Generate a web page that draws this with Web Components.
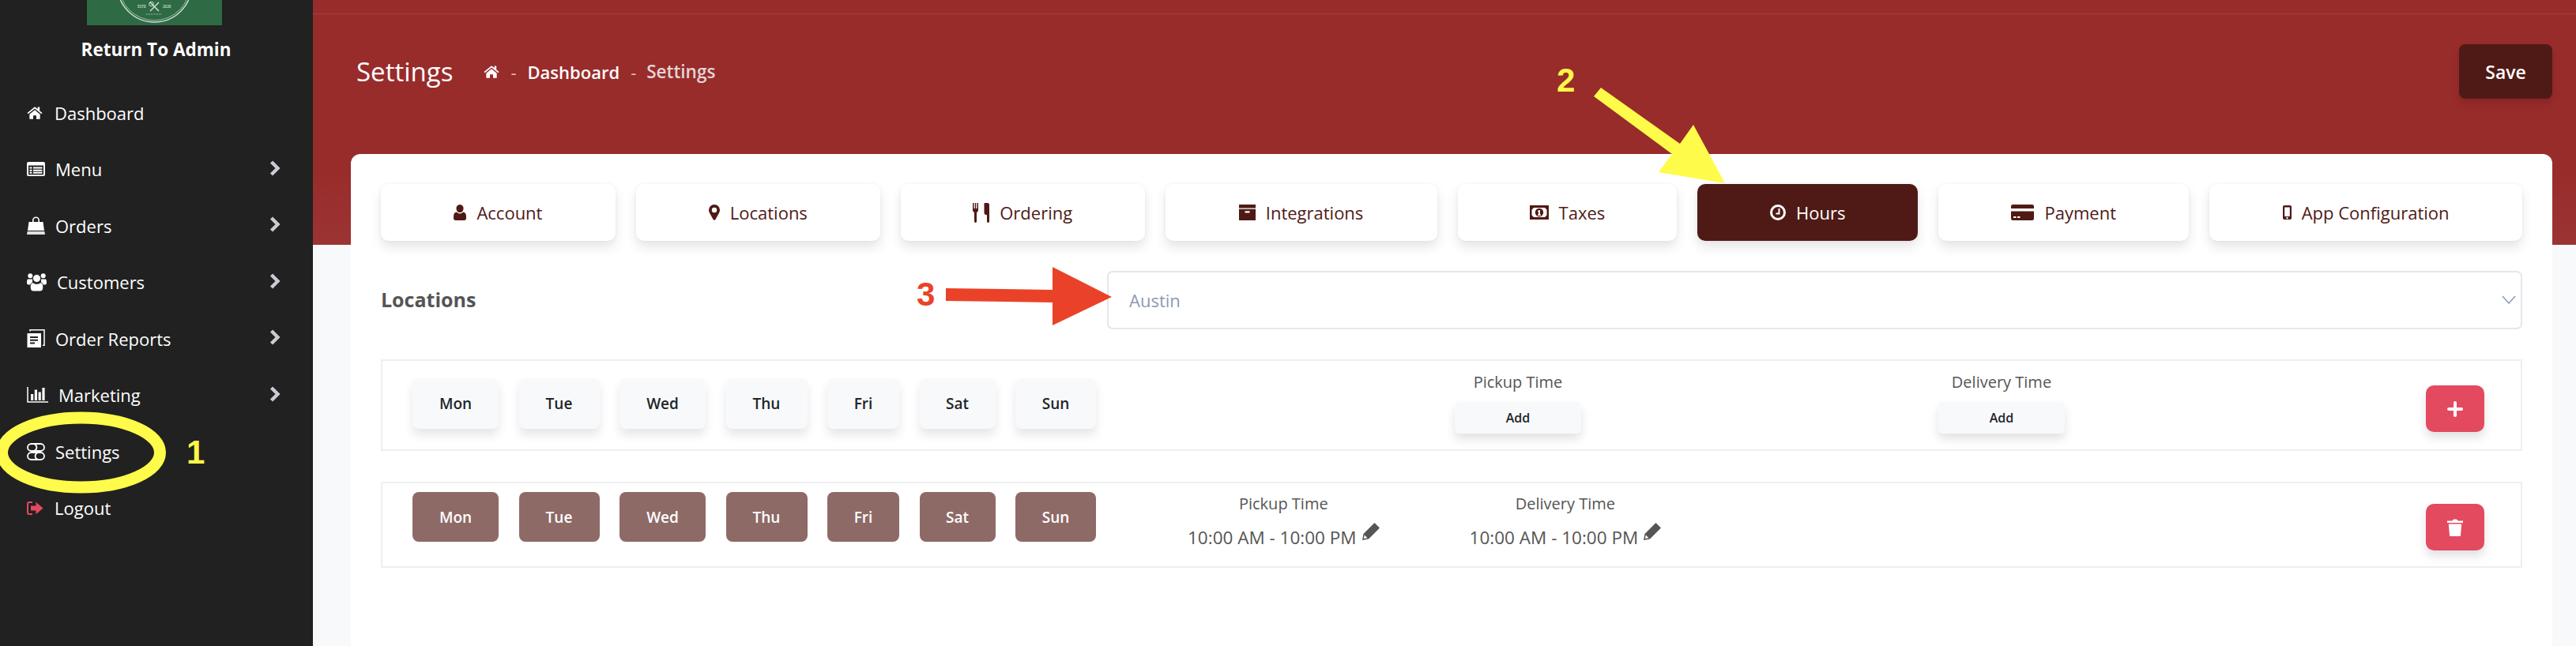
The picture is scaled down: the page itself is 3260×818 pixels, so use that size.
<!DOCTYPE html>
<html lang="en">
<head>
<meta charset="utf-8">
<title>Settings</title>
<style>
  html, body { margin: 0; height: 100%; overflow: hidden; background: #f8f9fb; }
  body { font-family: "Open Sans", sans-serif; }
</style>
</head>
<body>
<admin-app>
  <side-bar slot="side">
    <nav-item icon="home" w="20" h="17" gap="15">Dashboard</nav-item>
    <nav-item icon="menu" w="23" h="18" more>Menu</nav-item>
    <nav-item icon="bag" w="23" h="23" more>Orders</nav-item>
    <nav-item icon="users" w="25" h="23" gap="13" more>Customers</nav-item>
    <nav-item icon="report" w="23" h="23" more>Order Reports</nav-item>
    <nav-item icon="chart" w="27" h="20" gap="13" more>Marketing</nav-item>
    <nav-item icon="settings" w="23" h="22">Settings</nav-item>
    <nav-item icon="logout" w="21" h="17" gap="14" tint="#e34a60">Logout</nav-item>
  </side-bar>

  <page-header title="Settings" slot="head"></page-header>

  <settings-card slot="card">
    <tab-bar>
      <tab-button icon="user" w="16" h="20">Account</tab-button>
      <tab-button icon="pin" w="14" h="20">Locations</tab-button>
      <tab-button icon="cutlery" w="21" h="25">Ordering</tab-button>
      <tab-button icon="archive" w="21" h="20">Integrations</tab-button>
      <tab-button icon="money" w="24" h="18">Taxes</tab-button>
      <tab-button icon="clock" w="20" h="20" active>Hours</tab-button>
      <tab-button icon="card" w="29" h="20">Payment</tab-button>
      <tab-button icon="mobile" w="11" h="18">App Configuration</tab-button>
    </tab-bar>

    <location-select label="Locations" value="Austin"></location-select>

    <hours-row pad-top="22" act-top="31" first-gap="454" col-gap="452">
      <day-button slot="days" w="109">Mon</day-button>
      <day-button slot="days" w="102">Tue</day-button>
      <day-button slot="days" w="109">Wed</day-button>
      <day-button slot="days" w="103">Thu</day-button>
      <day-button slot="days" w="91">Fri</day-button>
      <day-button slot="days" w="96">Sat</day-button>
      <day-button slot="days" w="102">Sun</day-button>
      <time-col slot="times" label="Pickup Time"></time-col>
      <time-col slot="times" label="Delivery Time"></time-col>
      <action-button slot="action" icon="plus"></action-button>
    </hours-row>

    <hours-row selected pad-top="11" act-top="26" first-gap="116" col-gap="114">
      <day-button slot="days" w="109" selected>Mon</day-button>
      <day-button slot="days" w="102" selected>Tue</day-button>
      <day-button slot="days" w="109" selected>Wed</day-button>
      <day-button slot="days" w="103" selected>Thu</day-button>
      <day-button slot="days" w="91" selected>Fri</day-button>
      <day-button slot="days" w="96" selected>Sat</day-button>
      <day-button slot="days" w="102" selected>Sun</day-button>
      <time-col slot="times" label="Pickup Time" value="10:00 AM - 10:00 PM"></time-col>
      <time-col slot="times" label="Delivery Time" value="10:00 AM - 10:00 PM"></time-col>
      <action-button slot="action" icon="trash"></action-button>
    </hours-row>
  </settings-card>

  <note-layer slot="notes"></note-layer>
</admin-app>

<script>
// Every icon is drawn in its own viewBox; "body" is the inner svg markup
const ICONS = {
  home: { box: '0 0 24 20', body: '<path fill="currentColor" d="M12 1.2 .6 10.6l1.3 1.6L12 3.9l10.1 8.3 1.3-1.6-4-3.3V1.6h-3v3.1zM4 12.7 12 6l8 6.7V20h-5.6v-5.4H9.6V20H4z"/>' },
  menu: { box: '0 0 23 18', body: '<path fill="currentColor" fill-rule="evenodd" d="M2 0h19a2 2 0 0 1 2 2v14a2 2 0 0 1-2 2H2a2 2 0 0 1-2-2V2a2 2 0 0 1 2-2zm0 4.5v11.2c0 .3.2.5.5.5h18c.3 0 .5-.2.5-.5V4.500z"/><path fill="currentColor" d="M3.500 6.500h3v2h-3zM8 6.500h11.500v2H8zM3.500 9.700h3v2h-3zM8 9.700h11.500v2H8zM3.500 12.800h3v2h-3zM8 12.800h11.500v2H8z"/>' },
  bag: { box: '0 0 23 23', body: '<path fill="currentColor" d="M7 7V5a4.500 4.500 0 0 1 9 0v2h4.500L22 18H1L2.500 7zm1.600 0h5.800V5a2.900 2.900 0 0 0-5.800 0z"/><path fill="#dfe1e3" d="M.6 19h21.800l.6 4H0z"/>' },
  users: { box: '0 0 25 23', body: '<g fill="currentColor"><circle cx="4.300" cy="3.200" r="3"/><circle cx="20.700" cy="3.200" r="3"/><path d="M1.500 7.500h5.500v7H2C.7 14.500 0 13.500 0 12c0-2.500.4-4.500 1.500-4.500zM23.500 7.500H18v7h5c1.300 0 2-1 2-2.500 0-2.500-.4-4.500-1.500-4.500z"/><circle cx="12.500" cy="6.500" r="5" stroke="#212121" stroke-width="1"/><path stroke="#212121" stroke-width="1" d="M8 11.800c1.200 1 2.800 1.600 4.500 1.600s3.300-.6 4.500-1.600c2.600 0 3.800 2.200 3.800 6 0 3.200-1.500 5.200-4 5.200H8.200c-2.500 0-4-2-4-5.200 0-3.800 1.200-6 3.800-6z"/></g>' },
  report: { box: '0 0 23 23', body: '<path fill="currentColor" fill-rule="evenodd" d="M.5 5h17.500v18H.5zM4 9v2h10V9zm0 3.700v2h10v-2zm0 3.700v2h6v-2z"/><path fill="none" stroke="currentColor" stroke-width="1.500" d="M4 2.500V.8h18v19.500h-2"/>' },
  chart: { box: '0 0 27 20', body: '<path fill="none" stroke="currentColor" stroke-width="1.500" d="M1 0v19h26"/><path fill="currentColor" d="M5 9h3.200v8H5zM9.800 3.500H13V17H9.800zM14.600 6.500h3.200V17h-3.200zM19.400 1h3.200v16h-3.200z"/>' },
  settings: { box: '0 0 23 22', body: '<g fill="none" stroke="currentColor" stroke-width="1.800"><rect x="1" y="1" width="21" height="9" rx="4.500"/><rect x="1" y="12" width="21" height="9" rx="4.500"/><path d="M9.500 1.500a4.200 4.200 0 0 1 0 8M13.500 12.500a4.200 4.200 0 0 0 0 8"/></g>' },
  logout: { box: '0 0 21 17', body: '<path fill="none" stroke="currentColor" stroke-width="2" d="M7 1H3a2 2 0 0 0-2 2v11a2 2 0 0 0 2 2h4"/><path fill="currentColor" d="M5 5.500h6.500V.8L20.500 8.500l-9 7.700v-4.700H5z"/>' },
  chevron: { box: '0 0 14 20', body: '<path fill="none" stroke="currentColor" stroke-width="4.400" stroke-linejoin="miter" d="M2.500 2 10.500 10l-8 8"/>' },
  user: { box: '0 0 16 20', body: '<path fill="currentColor" d="M8 0a4.500 4.500 0 0 1 4.500 5c0 3-2 5-4.500 5S3.500 8 3.500 5A4.500 4.500 0 0 1 8 0zM4 9.500C5 10.800 6.400 11.500 8 11.500s3-.7 4-2c2.600 0 4 2 4 6v2c0 1.500-1 2.500-2.500 2.500h-11C1 20 0 19 0 17.500v-2c0-4 1.400-6 4-6z"/>' },
  pin: { box: '0 0 14 20', body: '<path fill="currentColor" fill-rule="evenodd" d="M7 0a7 7 0 0 1 7 7c0 1.600-.6 2.700-1.200 4L8.400 19a1.600 1.600 0 0 1-2.800 0L1.200 11C.6 9.700 0 8.600 0 7a7 7 0 0 1 7-7zm0 3.800a3.200 3.200 0 1 0 0 6.400 3.200 3.200 0 0 0 0-6.400z"/>' },
  cutlery: { box: '0 0 21 25', body: '<path fill="currentColor" d="M0 0h1.500v7h1.300V0h1.400v7h1.300V0H7v9c0 1.500-.8 2.500-2 3v11.500a1.500 1.500 0 0 1-3 0V12C.8 11.500 0 10.500 0 9zM15 0h3c1.500 0 3 .6 3 2v21.500a1.500 1.500 0 0 1-3 0V15h-1c-1.500 0-2.500-1-2.500-2.500V3c-.1-1.500-.1-3 .5-3z"/>' },
  archive: { box: '0 0 21 20', body: '<path fill="currentColor" fill-rule="evenodd" d="M0 0h21v4.500H0zM0 5.800h21V20H0zM7.500 8.200v2.300h6V8.200z"/>' },
  money: { box: '0 0 24 18', body: '<path fill="currentColor" fill-rule="evenodd" d="M0 0h24v18H0zM5 3l-2.500 2.500v7L5 15h14l2.500-2.500v-7L19 3z"/><path fill="currentColor" fill-rule="evenodd" d="M12 3.800a5.200 5.200 0 1 1 0 10.400 5.200 5.200 0 0 1 0-10.400zM11.800 6 10 7.200v1.200l1-.4v3.500h-1V13h4v-1.500h-1V6z"/>' },
  clock: { box: '0 0 20 20', body: '<path fill="currentColor" fill-rule="evenodd" d="M10 0a10 10 0 1 1 0 20 10 10 0 0 1 0-20zm0 3a7 7 0 1 0 0 14 7 7 0 0 0 0-14z"/><path fill="currentColor" d="M10.500 5h2v7.500H7.500v-2h3z"/>' },
  card: { box: '0 0 29 20', body: '<path fill="currentColor" fill-rule="evenodd" d="M2.500 0h24A2.500 2.500 0 0 1 29 2.500V5H0V2.500A2.500 2.500 0 0 1 2.500 0zM0 8.500h29v9a2.500 2.500 0 0 1-2.500 2.500h-24A2.500 2.500 0 0 1 0 17.500zm3 6.500v2h3.500v-2zm5 0v2h3.500v-2z"/>' },
  mobile: { box: '0 0 11 18', body: '<path fill="currentColor" fill-rule="evenodd" d="M2 0h7a2 2 0 0 1 2 2v14a2 2 0 0 1-2 2H2a2 2 0 0 1-2-2V2a2 2 0 0 1 2-2zm.2 2.500v11.500h6.600V2.500zM5.500 14.800a1.200 1.200 0 1 0 0 2.400 1.200 1.200 0 0 0 0-2.400z"/>' },
  pencil: { box: '0 0 22 22', body: '<path fill="currentColor" d="M15.500 0 22 6.500 8 20.500 0 22l1.500-8zM2.800 15.500l-.9 4.600 4.600-.9z"/>' },
  plus: { box: '0 0 20 20', body: '<path fill="none" stroke="currentColor" stroke-width="4" stroke-linecap="round" d="M10 2v16M2 10h16"/>' },
  trash: { box: '0 0 20 22', body: '<path fill="currentColor" d="M0 2.500h6.500C7 1 8 .5 10 .5s3 .5 3.500 2H20V5H0zM1.800 6.500h16.400L17 21c0 .6-.5 1-1 1H4c-.5 0-1-.4-1-1z"/>' },
};

class UiIcon extends HTMLElement {
  connectedCallback() {
    const icon = ICONS[this.getAttribute('name')];
    const w = this.getAttribute('w');
    const h = this.getAttribute('h');
    this.attachShadow({ mode: 'open' });
    this.shadowRoot.innerHTML = `
      <style>
        :host { display: inline-flex; flex: none; }
        svg { display: block; }
      </style>
      <svg width="${w}" height="${h}" viewBox="${icon.box}">${icon.body}</svg>
    `;
  }
}

// Sidebar on the left, header + card on the right, annotations on top of it all
class AdminApp extends HTMLElement {
  constructor() {
    super();
    this.attachShadow({ mode: 'open' });
    this.shadowRoot.innerHTML = `
      <style>
        :host { display: flex; position: relative; width: 3260px; height: 818px; overflow: hidden; }
        main { flex: 1; min-width: 0; }
        .overlap { margin: -115px 30px 0 48px; }
      </style>
      <slot name="side"></slot>
      <main>
        <slot name="head"></slot>
        <div class="overlap"><slot name="card"></slot></div>
      </main>
      <slot name="notes"></slot>
    `;
  }
}

class SideBar extends HTMLElement {
  constructor() {
    super();
    this.attachShadow({ mode: 'open' });
    this.shadowRoot.innerHTML = `
      <style>
        :host { display: flex; flex-direction: column; width: 396px; flex: none; background: #212121; color: #fff; }
        .logo { display: block; width: 171px; height: 32px; margin: 0 auto 0 110px; }
        .back { margin: 17px 0 0 -1px; height: 28px; line-height: 28px; text-align: center; font-weight: 700; font-size: 22.500px; }
        nav { margin-top: 30px; display: grid; grid-auto-rows: 71.500px; }
      </style>
      <svg class="logo" viewBox="0 0 171 32">
        <rect width="171" height="32" fill="#2e6a44"/>
        <circle cx="85.500" cy="-19" r="47" fill="none" stroke="#cfe0d3" stroke-width="1.400"/>
        <circle cx="85.500" cy="-19" r="44.800" fill="none" stroke="#cfe0d3" stroke-width=".7"/>
        <path d="M80 3l11 11M91 3 80 14" stroke="#cfe0d3" stroke-width="1.500"/>
        <circle cx="81.500" cy="5" r="2.800" fill="none" stroke="#cfe0d3"/>
        <text x="64" y="9.500" font-size="4.500" fill="#b9d2bf" font-family="Open Sans" font-weight="700">ESTD</text>
        <text x="96" y="9.500" font-size="4.500" fill="#b9d2bf" font-family="Open Sans" font-weight="700">2020</text>
        <path d="M75 18h20" stroke="#b9d2bf" stroke-width="1" stroke-dasharray="1 1"/>
      </svg>
      <div class="back">Return To Admin</div>
      <nav><slot></slot></nav>
    `;
  }
}

class NavItem extends HTMLElement {
  constructor() {
    super();
    this.attachShadow({ mode: 'open' });
  }

  connectedCallback() {
    const gap = this.getAttribute('gap') || 13;
    const tint = this.getAttribute('tint') || '#fff';
    const more = this.hasAttribute('more')
      ? '<ui-icon class="more" name="chevron" w="14" h="20"></ui-icon>'
      : '';
    this.shadowRoot.innerHTML = `
      <style>
        :host { display: flex; align-items: center; padding: 0 41px 0 34px; font-size: 22px; color: #fff; }
        .icon { color: ${tint}; margin-right: ${gap}px; }
        .more { color: #c9cdd1; margin-left: auto; margin-top: -3px; }
      </style>
      <ui-icon class="icon" name="${this.getAttribute('icon')}" w="${this.getAttribute('w')}" h="${this.getAttribute('h')}"></ui-icon>
      <slot></slot>
      ${more}
    `;
  }
}

class PageHeader extends HTMLElement {
  constructor() {
    super();
    this.attachShadow({ mode: 'open' });
  }

  connectedCallback() {
    const title = this.getAttribute('title');
    this.shadowRoot.innerHTML = `
      <style>
        :host { display: block; height: 310px; background: linear-gradient(#982c2b 70%, #9b3433); color: #fff; }
        .line { height: 17px; border-bottom: 1px solid rgba(255,255,255,.1); }
        .row { display: flex; align-items: center; height: 69px; margin: 38px 30px 0 55px; }
        h1 { margin: 0; font-size: 33px; font-weight: 400; line-height: 69px; }
        .crumbs { display: flex; align-items: center; margin-left: 39px; font-size: 22px; font-weight: 600; }
        .dash { margin: 0 14px; color: #dcc3c3; font-weight: 400; }
        .here { color: #e4d5d5; font-size: 22.500px; margin-left: -1px; }
        button {
          margin-left: auto; width: 118px; height: 69px; border: 0; border-radius: 8px;
          background: #4f1a16; color: #fff; font: 600 23px "Open Sans", sans-serif;
          box-shadow: 0 6px 10px rgba(60,10,10,.18);
        }
      </style>
      <div class="line"></div>
      <div class="row">
        <h1>${title}</h1>
        <div class="crumbs">
          <ui-icon name="home" w="20" h="17"></ui-icon>
          <span class="dash">-</span>
          <span>Dashboard</span>
          <span class="dash">-</span>
          <span class="here">${title}</span>
        </div>
        <button>Save</button>
      </div>
    `;
  }
}

class SettingsCard extends HTMLElement {
  constructor() {
    super();
    this.attachShadow({ mode: 'open' });
    this.shadowRoot.innerHTML = `
      <style>
        :host {
          display: flex; flex-direction: column; gap: 38px; box-sizing: border-box;
          height: 700px; padding: 38px; background: #fff; border-radius: 12px;
        }
      </style>
      <slot></slot>
    `;
  }
}

class TabBar extends HTMLElement {
  constructor() {
    super();
    this.attachShadow({ mode: 'open' });
    // Column widths follow the reference, they are not equal and not purely content driven
    this.shadowRoot.innerHTML = `
      <style>
        :host {
          display: grid; column-gap: 26px; height: 72px;
          grid-template-columns: 297fr 309fr 309fr 344fr 278fr 279fr 317fr 396fr;
        }
      </style>
      <slot></slot>
    `;
  }
}

class TabButton extends HTMLElement {
  constructor() {
    super();
    this.attachShadow({ mode: 'open' });
  }

  connectedCallback() {
    const active = this.hasAttribute('active');
    this.shadowRoot.innerHTML = `
      <style>
        :host {
          display: flex; align-items: center; justify-content: center; gap: 13px;
          border-radius: 10px; font-size: 22px;
          background: ${active ? '#4f1a16' : '#fff'};
          color: ${active ? '#fff' : '#4f1a16'};
          box-shadow: 0 8px 14px rgba(60,60,80,.13), 0 0 4px rgba(60,60,80,.05);
        }
      </style>
      <ui-icon name="${this.getAttribute('icon')}" w="${this.getAttribute('w')}" h="${this.getAttribute('h')}"></ui-icon>
      <slot></slot>
    `;
  }
}

class LocationSelect extends HTMLElement {
  constructor() {
    super();
    this.attachShadow({ mode: 'open' });
  }

  connectedCallback() {
    this.shadowRoot.innerHTML = `
      <style>
        :host { display: flex; align-items: center; height: 74px; }
        label { width: 919px; flex: none; font-size: 25px; font-weight: 700; color: #555; margin-top: -2px; }
        .box {
          flex: 1; display: flex; align-items: center; justify-content: space-between; height: 100%;
          box-sizing: border-box; padding: 0 6px 0 26px;
          border: 2px solid #e4e7ee; border-radius: 7px; background: #fff;
          font-size: 22px; color: #8d9bb0;
        }
        svg { display: block; margin-top: -2px; }
      </style>
      <label>${this.getAttribute('label')}</label>
      <div class="box">
        <span>${this.getAttribute('value')}</span>
        <svg width="18" height="11" viewBox="0 0 18 11"><path d="M1 1l8 9 8-9" fill="none" stroke="#8d9bb0" stroke-width="1.500"/></svg>
      </div>
    `;
  }
}

// One row of opening hours; the offsets differ between the empty row and the saved row
class HoursRow extends HTMLElement {
  constructor() {
    super();
    this.attachShadow({ mode: 'open' });
  }

  connectedCallback() {
    const saved = this.hasAttribute('selected');
    this.shadowRoot.innerHTML = `
      <style>
        :host {
          display: flex; align-items: flex-start; box-sizing: border-box;
          height: ${saved ? 109 : 116}px; margin-bottom: 1px;
          padding: ${this.getAttribute('pad-top')}px 46px 0 38px;
          border: 2px solid #eeeff1;
        }
        .days { display: flex; gap: 25.500px; }
        .times { display: flex; gap: ${this.getAttribute('col-gap')}px; margin-left: ${this.getAttribute('first-gap')}px; margin-top: ${saved ? 0 : -10}px; }
        .action { margin-left: auto; margin-top: ${this.getAttribute('act-top') - this.getAttribute('pad-top')}px; }
      </style>
      <div class="days"><slot name="days"></slot></div>
      <div class="times"><slot name="times"></slot></div>
      <div class="action"><slot name="action"></slot></div>
    `;
  }
}

class DayButton extends HTMLElement {
  constructor() {
    super();
    this.attachShadow({ mode: 'open' });
  }

  connectedCallback() {
    const on = this.hasAttribute('selected');
    this.shadowRoot.innerHTML = `
      <style>
        :host {
          display: flex; align-items: center; justify-content: center; flex: none;
          width: ${this.getAttribute('w')}px; height: ${on ? 63 : 64}px;
          border-radius: 8px; font-size: 19px; font-weight: 600;
          background: ${on ? '#8e6a67' : '#f8f9fb'};
          color: ${on ? '#fff' : '#212529'};
          ${on ? '' : 'box-shadow: 0 8px 12px rgba(60,60,80,.12);'}
        }
      </style>
      <slot></slot>
    `;
  }
}

// Shows the saved time with a pencil, or an Add button when there is no value yet
class TimeCol extends HTMLElement {
  constructor() {
    super();
    this.attachShadow({ mode: 'open' });
  }

  connectedCallback() {
    const value = this.getAttribute('value');
    const body = value
      ? `<div class="time"><span>${value}</span><ui-icon name="pencil" w="22" h="22"></ui-icon></div>`
      : '<div class="add">Add</div>';
    this.shadowRoot.innerHTML = `
      <style>
        :host { display: flex; flex-direction: column; align-items: center; color: #555; }
        .label { font-size: 20px; line-height: 30px; font-weight: 400; }
        .add {
          margin-top: 10px; width: 160px; height: 40px; line-height: 40px; text-align: center;
          border-radius: 6px; background: #f8f9fb; color: #212529; font-size: 16px; font-weight: 600;
          box-shadow: 0 7px 12px rgba(60,60,80,.14);
        }
        .time { display: flex; margin-top: 13px; font-size: 22.500px; line-height: 30px; gap: 7px; }
        .time ui-icon { margin-top: -4px; }
      </style>
      <div class="label">${this.getAttribute('label')}</div>
      ${body}
    `;
  }
}

class ActionButton extends HTMLElement {
  constructor() {
    super();
    this.attachShadow({ mode: 'open' });
  }

  connectedCallback() {
    const name = this.getAttribute('icon');
    const size = name === 'plus' ? 'w="20" h="20"' : 'w="20" h="22"';
    this.shadowRoot.innerHTML = `
      <style>
        :host {
          display: flex; align-items: center; justify-content: center;
          width: 74px; height: 59px; border-radius: 10px;
          background: #e34a60; color: #fff;
          box-shadow: 0 7px 12px rgba(60,60,80,.16);
        }
      </style>
      <ui-icon name="${name}" ${size}></ui-icon>
    `;
  }
}

// The hand drawn tutorial marks; they sit over the page at their own coordinates
class NoteLayer extends HTMLElement {
  constructor() {
    super();
    this.attachShadow({ mode: 'open' });
    this.shadowRoot.innerHTML = `
      <style>
        :host { position: absolute; inset: 0; pointer-events: none; }
        svg { position: absolute; left: 0; top: 0; }
        span { position: absolute; font: 700 42px/1 "Liberation Sans", sans-serif; }
        .yellow { color: #fff84a; }
        .red { color: #ea4228; }
      </style>
      <svg width="3260" height="818">
        <ellipse cx="102.500" cy="573" rx="100" ry="44" fill="none" stroke="#fffb4a" stroke-width="15"/>
        <polygon fill="#fffb4a" points="2026,111 2126,182 2143,158 2183,232 2099,218 2116,195 2017,122"/>
        <polygon fill="#ea4228" points="1197,365 1332,367 1332,338 1407,376 1332,412 1332,383 1197,381"/>
      </svg>
      <span class="yellow" style="left:236px;top:552px">1</span>
      <span class="yellow" style="left:1970px;top:81px">2</span>
      <span class="red" style="left:1160px;top:352px">3</span>
    `;
  }
}

customElements.define('ui-icon', UiIcon);
customElements.define('admin-app', AdminApp);
customElements.define('side-bar', SideBar);
customElements.define('nav-item', NavItem);
customElements.define('page-header', PageHeader);
customElements.define('settings-card', SettingsCard);
customElements.define('tab-bar', TabBar);
customElements.define('tab-button', TabButton);
customElements.define('location-select', LocationSelect);
customElements.define('hours-row', HoursRow);
customElements.define('day-button', DayButton);
customElements.define('time-col', TimeCol);
customElements.define('action-button', ActionButton);
customElements.define('note-layer', NoteLayer);
</script>
</body>
</html>
